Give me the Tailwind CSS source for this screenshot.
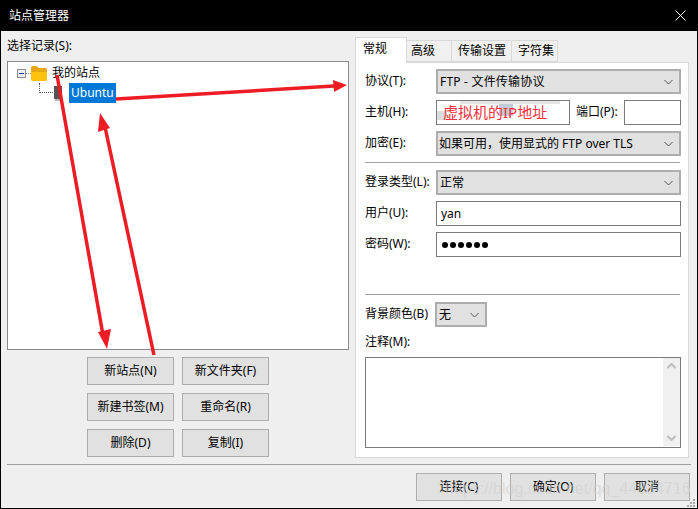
<!DOCTYPE html>
<html lang="zh-CN">
<head>
    <meta charset="UTF-8">
    <title>站点管理器</title>
    <script src="https://cdn.jsdelivr.net/npm/@tailwindcss/browser@4"></script>
</head>
<body class="bg-[#efefef]">
    <div class="relative w-[698px] h-[509px] overflow-hidden border-x border-b border-black bg-[#efefef] text-[12px] leading-[16px] text-black font-['Noto_Sans','Noto_Sans_CJK_SC',sans-serif]">
        <!-- Title bar -->
        <div class="flex justify-between items-center h-[31px] bg-black text-white pl-[8px] pr-[11px]">
            <span>站点管理器</span>
            <svg width="11" height="11" viewBox="0 0 11 11" class="stroke-white"><path d="M.5.5l10 10M10.5.5l-10 10" fill="none"/></svg>
        </div>

        <div class="flex h-[433px] pl-[6px]">
            <!-- Left: site tree -->
            <div class="w-[342px] pt-[7px]">
                <div class="h-[23px]">选择记录(S):</div>
                <div class="h-[289px] border border-[#8a8a8e] bg-white pl-[9px] pt-[3px]">
                    <div class="flex items-center h-[17px]">
                        <span class="flex items-center justify-center w-[9px] h-[9px] border border-[#8c8c8c] bg-[#eeeeee]"><span class="w-[5px] h-px bg-[#1f3f9f]"></span></span>
                        <span class="w-[5px] border-t border-dotted border-[#777]"></span>
                        <svg width="16" height="15" viewBox="0 0 16 15"><path d="M0 1.5Q0 0 1.5 0h4L8 2h6.500Q16 2 16 3.500V7H0z" fill="#e6a914"/><path d="M0 6h16v7.500q0 1.500-1.500 1.500h-13Q0 15 0 13.500z" fill="#ffc20e"/></svg>
                        <span class="ml-[5px] pb-[2px]">我的站点</span>
                    </div>
                    <div class="flex items-center h-[20px] mt-[1px] pl-[22px]">
                        <span class="w-[16px] h-[10px] border-l border-b border-dotted border-[#555] -mt-[10px]"></span>
                        <svg width="8" height="15" viewBox="0 0 8 15" class="ml-[-1px]"><path d="M0 0h8v13H0z" fill="#555"/><path d="M1 13h6v2H1z" fill="#bbb"/></svg>
                        <span class="flex items-center h-[20px] ml-[7px] px-[2px] bg-[#0078d7] text-white">Ubuntu</span>
                    </div>
                </div>
                <div class="grid grid-cols-[87px_87px] auto-rows-[28px] gap-x-[8px] gap-y-[8px] justify-center pt-[7px]">
                    <button class="border border-[#adadad] bg-[#e1e1e1]">新站点(N)</button>
                    <button class="border border-[#adadad] bg-[#e1e1e1]">新文件夹(F)</button>
                    <button class="border border-[#adadad] bg-[#e1e1e1]">新建书签(M)</button>
                    <button class="border border-[#adadad] bg-[#e1e1e1]">重命名(R)</button>
                    <button class="border border-[#adadad] bg-[#e1e1e1]">删除(D)</button>
                    <button class="border border-[#adadad] bg-[#e1e1e1]">复制(I)</button>
                </div>
            </div>

            <!-- Right: tabs -->
            <div class="w-[334px] ml-[6px] pt-[6px]">
                <div class="flex items-end h-[25px] text-[12px]">
                    <div class="relative z-10 flex items-center w-[52px] h-[26px] -mb-px pb-[4px] pl-[7px] bg-white border border-b-0 border-[#d9d9d9]">常规</div>
                    <div class="flex items-center w-[45px] h-[22px] pl-[4px] bg-[#f0f0f0] border border-l-0 border-[#d9d9d9]">高级</div>
                    <div class="flex items-center w-[60px] h-[22px] pl-[6px] bg-[#f0f0f0] border border-l-0 border-[#d9d9d9]">传输设置</div>
                    <div class="flex items-center w-[46px] h-[22px] pl-[6px] bg-[#f0f0f0] border border-l-0 border-[#d9d9d9]">字符集</div>
                </div>
                <div class="h-[396px] bg-white border border-[#d9d9d9] pl-[9px] pr-[7px] pt-[6px]">
                    <div class="flex items-center h-[25px]">
                        <label class="w-[71px] pb-[2px]">协议(T):</label>
                        <div class="flex items-center justify-between w-[245px] h-[25px] border-2 border-[#adadad] bg-[#e1e1e1] pl-[2px] pr-[6px] tracking-[.2px]">FTP - 文件传输协议
                            <svg width="9" height="6" viewBox="0 0 9 6"><path d="M.5 1l4 4 4-4" fill="none" stroke="#555"/></svg>
                        </div>
                    </div>
                    <div class="flex items-center h-[25px] mt-[6px]">
                        <label class="w-[71px] pb-[2px]">主机(H):</label>
                        <div class="relative w-[134px] h-[25px] border border-[#7a7a7a] bg-white">
                            <!-- smudged address behind the red note -->
                            <div class="absolute left-[23px] top-0 w-[100px] h-[3px] bg-[#e4e4e4]"></div>
                            <div class="absolute left-0 top-[10px] w-[10px] h-[9px] bg-[#dcdcdc]"></div>
                            <div class="absolute left-[62px] top-[3px] w-[14px] h-[12px] bg-[#c3cbd6]"></div>
                            <span class="absolute left-[6px] top-[1px] text-[15px] leading-[21px] text-[#f0323c] whitespace-nowrap">虚拟机的IP地址</span>
                        </div>
                        <label class="ml-[6px] w-[48px] pb-[2px]">端口(P):</label>
                        <div class="w-[57px] h-[25px] border border-[#7a7a7a] bg-white"></div>
                    </div>
                    <div class="flex items-center h-[25px] mt-[6px]">
                        <label class="w-[71px] pb-[2px]">加密(E):</label>
                        <div class="flex items-center justify-between w-[245px] h-[25px] border-2 border-[#adadad] bg-[#e1e1e1] pl-[1px] pr-[6px]">如果可用，使用显式的 FTP over TLS
                            <svg width="9" height="6" viewBox="0 0 9 6"><path d="M.5 1l4 4 4-4" fill="none" stroke="#555"/></svg>
                        </div>
                    </div>
                    <div class="h-px bg-[#a0a0a0] mt-[6px] w-[315px]"></div>
                    <div class="flex items-center h-[25px] mt-[7px]">
                        <label class="w-[71px] pb-[2px]">登录类型(L):</label>
                        <div class="flex items-center justify-between w-[245px] h-[25px] border-2 border-[#adadad] bg-[#e1e1e1] pl-[2px] pr-[6px]">正常
                            <svg width="9" height="6" viewBox="0 0 9 6"><path d="M.5 1l4 4 4-4" fill="none" stroke="#555"/></svg>
                        </div>
                    </div>
                    <div class="flex items-center h-[25px] mt-[6px]">
                        <label class="w-[71px] pb-[2px]">用户(U):</label>
                        <div class="flex items-center w-[245px] h-[25px] border border-[#7a7a7a] bg-white pl-[4px]">yan</div>
                    </div>
                    <div class="flex items-center h-[25px] mt-[6px]">
                        <label class="w-[71px] pb-[2px]">密码(W):</label>
                        <div class="flex items-center gap-[2px] w-[245px] h-[25px] border border-[#7a7a7a] bg-white pl-[5px]">
                            <span class="w-[6px] h-[6px] rounded-full bg-black"></span>
                            <span class="w-[6px] h-[6px] rounded-full bg-black"></span>
                            <span class="w-[6px] h-[6px] rounded-full bg-black"></span>
                            <span class="w-[6px] h-[6px] rounded-full bg-black"></span>
                            <span class="w-[6px] h-[6px] rounded-full bg-black"></span>
                            <span class="w-[6px] h-[6px] rounded-full bg-black"></span>
                        </div>
                    </div>
                    <div class="h-px bg-[#a0a0a0] mt-[37px] w-[315px]"></div>
                    <div class="flex items-center h-[25px] mt-[7px]">
                        <label class="w-[70px] pb-[2px]">背景颜色(B)</label>
                        <div class="flex items-center justify-between w-[52px] h-[25px] border-2 border-[#adadad] bg-[#e1e1e1] pl-[2px] pr-[6px]">无
                            <svg width="9" height="6" viewBox="0 0 9 6"><path d="M.5 1l4 4 4-4" fill="none" stroke="#555"/></svg>
                        </div>
                    </div>
                    <div class="mt-[7px] h-[23px]">注释(M):</div>
                    <div class="flex justify-end w-[316px] h-[91px] border border-[#7a7a7a] bg-white">
                        <div class="flex flex-col justify-between items-center w-[17px] h-[88px] bg-[#f0f0f0] py-[5px]">
                            <svg width="9" height="6" viewBox="0 0 9 6"><path d="M.5 5l4-4 4 4" fill="none" stroke="#bdbdbd" stroke-width="2"/></svg>
                            <svg width="9" height="6" viewBox="0 0 9 6"><path d="M.5 1l4 4 4-4" fill="none" stroke="#bdbdbd" stroke-width="2"/></svg>
                        </div>
                    </div>
                </div>
            </div>
        </div>

        <!-- Footer -->
        <div class="h-px bg-[#a0a0a0] ml-[6px] w-[684px]"></div>
        <div class="flex justify-end gap-[8px] pt-[8px] pr-[7px]">
            <button class="w-[86px] h-[28px] border border-[#adadad] bg-[#e1e1e1]">连接(C)</button>
            <button class="w-[86px] h-[28px] border border-[#adadad] bg-[#e1e1e1]">确定(O)</button>
            <button class="w-[86px] h-[28px] border border-[#adadad] bg-[#e1e1e1]">取消</button>
        </div>

        <!-- Red annotation arrows -->
        <svg class="absolute -left-px top-0 pointer-events-none" width="698" height="509" viewBox="0 0 698 509">
            <g stroke="#ed1c24" stroke-width="3.500" fill="#ed1c24">
                <path d="M57 75L103 335" fill="none"/>
                <path d="M154 355L105 127" fill="none"/>
                <path d="M116 99L334 86" fill="none"/>
            </g>
            <g fill="#ed1c24">
                <path d="M107 349L98 332 111 329z"/>
                <path d="M100 113L110 128 98 132z"/>
                <path d="M347 85L333 80 334 92z"/>
            </g>
        </svg>

        <!-- Blog watermark -->
        <span class="absolute left-[444px] top-[478px] text-[16px] leading-[22px] text-[#d0d0d0]/60 whitespace-nowrap font-['Liberation_Sans',sans-serif]">https://blog.csdn.net/qq_44884716</span>

        <!-- Resize grip -->
        <svg class="absolute right-0 bottom-0" width="10" height="10" viewBox="0 0 10 10" fill="#a8a8a8"><path d="M6 1h2v2H6zM3 4h2v2H3zM6 4h2v2H6zM0 7h2v2H0zM3 7h2v2H3zM6 7h2v2H6z"/></svg>
    </div>
</body>
</html>
